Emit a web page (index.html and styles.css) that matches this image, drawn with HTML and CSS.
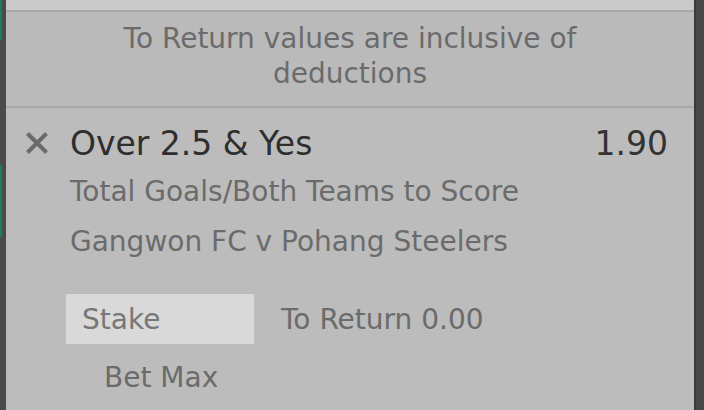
FILE: index.html
```html
<!DOCTYPE html>
<html>
<head>
    <title>Bet Slip</title>
    <link rel="stylesheet" href="styles.css">
</head>
<body>
    <div class="slip">
        <!-- barra izquierda -->
        <div class="rail">
            <div class="mark"></div>
            <div class="mark mark-low"></div>
        </div>

        <div class="panel">
            <div class="topbar"></div>

            <div class="notice">To Return values are inclusive of deductions</div>

            <!-- seleccion -->
            <div class="bet">
                <div class="bet-head">
                    <span class="remove">
                        <svg width="22" height="22" viewBox="0 0 22 22">
                            <path d="M1.5 1.5 L20.5 20.5 M20.5 1.5 L1.5 20.5" stroke="#6a6a6a" stroke-width="4" fill="none"/>
                        </svg>
                    </span>
                    <span class="bet-name">Over 2.5 &amp; Yes</span>
                    <span class="odds">1.90</span>
                </div>
                <div class="bet-line first">Total Goals/Both Teams to Score</div>
                <div class="bet-line">Gangwon FC v Pohang Steelers</div>

                <div class="stake-row">
                    <div class="stake">Stake</div>
                    <div class="to-return">To Return 0.00</div>
                </div>
                <div class="bet-max">Bet Max</div>
            </div>
        </div>

        <div class="edge"></div>
    </div>
</body>
</html>
```

FILE: styles.css
```css
body { margin: 0; font-family: "DejaVu Sans", Verdana, sans-serif; }
.slip { display: flex; height: 410px; overflow: hidden; }
.rail { width: 6px; background: #4a494c; display: flex; flex-direction: column; }
.mark { width: 2px; height: 40px; background: #17805c; }
.mark-low { margin-top: 125px; height: 72px; }
.panel { flex: 1; background: #bcbcbc; }
.topbar { height: 10px; background: #c9c9c9; border-bottom: 2px solid #a8a8a8; }
.notice { padding: 9px 80px 15px; text-align: center; font-size: 28px; line-height: 35px; color: #6b6b6b; background: #bababa; border-bottom: 2px solid #a8a8a8; }
.bet { padding: 15px 26px 0 20px; }
.bet-head { display: flex; align-items: center; height: 40px; }
.remove { width: 22px; height: 22px; margin-right: 22px; display: flex; }
.bet-name { flex: 1; font-size: 33px; color: #2e2e2e; }
.odds { font-size: 33px; color: #333; }
.bet-line { font-size: 28px; line-height: 50px; color: #6b6b6b; padding-left: 44px; }
.bet-line.first { margin-top: 4px; }
.stake-row { display: flex; align-items: center; margin-top: 27px; padding-left: 40px; }
.stake { width: 172px; height: 50px; line-height: 52px; padding-left: 16px; background: #d9d9d9; font-size: 28px; color: #777; }
.to-return { margin-left: 27px; font-size: 28px; color: #6b6b6b; }
.bet-max { margin-top: 9px; padding-left: 78px; font-size: 28px; line-height: 50px; color: #6b6b6b; }
.edge { width: 10px; background: #484848; border-left: 2px solid #3a3a3a; box-sizing: border-box; }
```
